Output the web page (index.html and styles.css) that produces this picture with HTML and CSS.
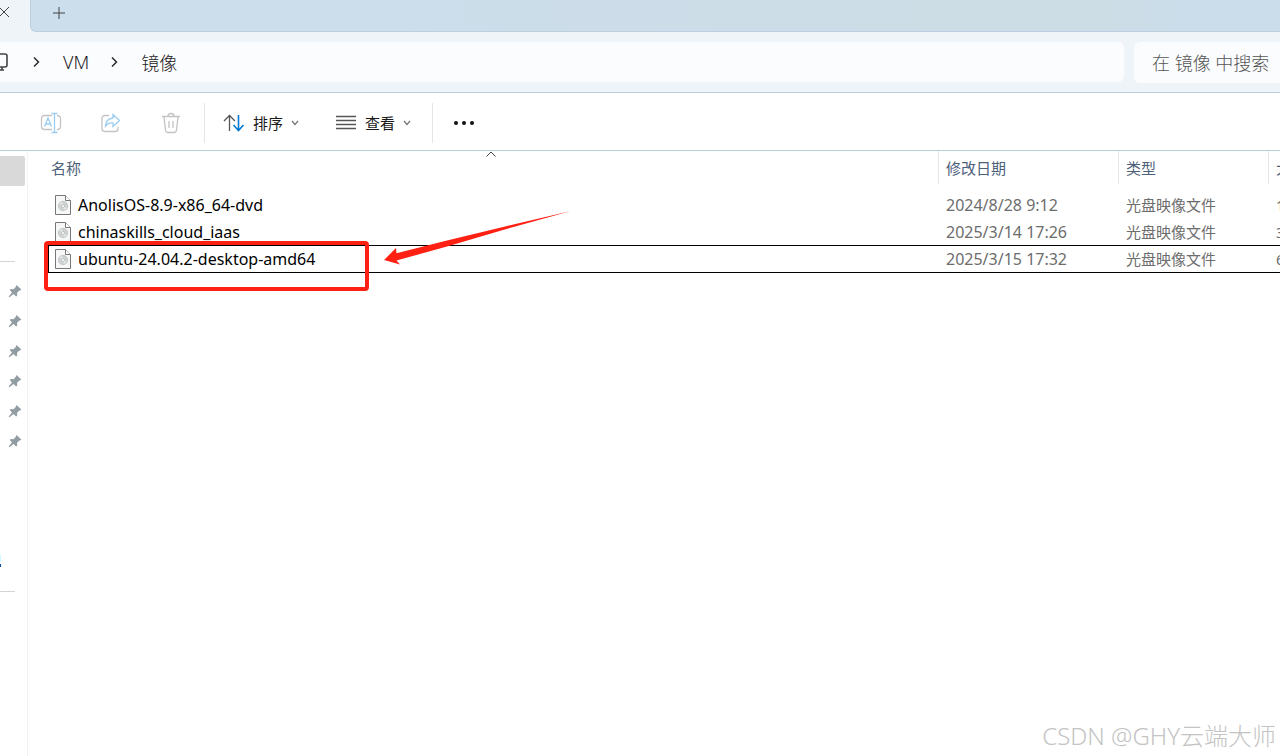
FILE: index.html
```html
<!DOCTYPE html>
<html lang="zh-CN">
<head>
  <meta charset="UTF-8" />
  <meta name="viewport" content="width=device-width, initial-scale=1.0"/>
  <title>镜像</title>
  <link rel="stylesheet" href="styles.css">
</head>
<body>

  <header class="tab-bar">
    <div class="tab">
      <button class="tab-close" aria-label="关闭标签页">
        <svg width="12" height="12" viewBox="0 0 12 12"><path d="M1 1l10 10M11 1L1 11"/></svg>
      </button>
    </div>
    <div class="tab-rest">
      <button class="tab-new" aria-label="新建标签页">
        <svg width="12" height="12" viewBox="0 0 12 12"><path d="M6 0v12M0 6h12"/></svg>
      </button>
    </div>
  </header>

  <div class="nav-bar">
    <nav class="address" aria-label="路径">
      <svg class="pc-icon" width="8" height="20" viewBox="0 0 8 20"><path d="M0 2h5q2 0 2 2v9q0 2-2 2H0M2 15v3M0 18h4"/></svg>
      <svg class="crumb-arrow" width="8" height="12" viewBox="0 0 8 12"><path d="M2 1.500l4.500 4.500L2 10.500"/></svg>
      <a class="crumb" href="#">VM</a>
      <svg class="crumb-arrow" width="8" height="12" viewBox="0 0 8 12"><path d="M2 1.500l4.500 4.500L2 10.500"/></svg>
      <a class="crumb" href="#">镜像</a>
    </nav>
    <input class="search" type="text" placeholder="在 镜像 中搜索" aria-label="在 镜像 中搜索">
  </div>

  <div class="toolbar">
    <div class="tool-group tool-edit">
      <button class="tool" aria-label="重命名" disabled>
        <svg width="22" height="22" viewBox="0 0 22 22">
          <path class="dim" d="M12 3.500H4.500q-3 0-3 3v8q0 3 3 3H12M17 3.500q3.500 0 3.500 3v8q0 3-3.500 3"/>
          <path class="tint" d="M4.500 14.500l3.500-8.500 3.500 8.500M5.500 12h5M14.500 1.500v19M11.500 1.500h6M11.500 20.500h6"/>
        </svg>
      </button>
      <button class="tool" aria-label="共享" disabled>
        <svg width="22" height="22" viewBox="0 0 22 22">
          <path class="dim" d="M9 3.500H5q-3 0-3 3v10q0 3 3 3h10q3 0 3-3v-2"/>
          <path class="tint" d="M13 2.500l6.500 6-6.500 6v-3.500q-5-.5-7.500 3 .5-7.500 7.500-8z"/>
        </svg>
      </button>
      <button class="tool" aria-label="删除" disabled>
        <svg width="22" height="22" viewBox="0 0 22 22">
          <path class="dim" d="M2 4.500h18M8 4q0-2.500 3-2.500T14 4M4 5l1.500 13q.3 2.500 2.500 2.500h6q2.200 0 2.500-2.500L18 5M9 9v7M13 9v7"/>
        </svg>
      </button>
    </div>
    <div class="tool-group tool-view">
      <button class="tool-text">
        <svg width="22" height="18" viewBox="0 0 22 18">
          <path class="up" d="M6.500 17V1.500M1 7l5.500-5.500L12 7"/>
          <path class="down" d="M15.500 1v15.500M10.500 11l5 5.500 5-5.500"/>
        </svg>
        <span>排序</span>
        <svg class="caret" width="8" height="6" viewBox="0 0 8 6"><path d="M1 1l3 3.500L7 1"/></svg>
      </button>
      <button class="tool-text">
        <svg width="22" height="18" viewBox="0 0 22 18"><path class="up" d="M1 2.500h20M1 6.500h20M1 10.500h20M1 14.500h20"/></svg>
        <span>查看</span>
        <svg class="caret" width="8" height="6" viewBox="0 0 8 6"><path d="M1 1l3 3.500L7 1"/></svg>
      </button>
    </div>
    <button class="more" aria-label="查看更多">
      <svg width="22" height="6" viewBox="0 0 22 6"><circle cx="3" cy="3" r="2"/><circle cx="11" cy="3" r="2"/><circle cx="19" cy="3" r="2"/></svg>
    </button>
  </div>

  <main class="content">
    <svg class="defs" width="0" height="0" aria-hidden="true">
      <symbol id="pin" viewBox="0 0 14 14">
        <path d="M8.500 1l4.800 4.500-1.300 1-1 .2-2 2.300.2 2.500-1 1L5.500 10 1.500 13.300.7 12.600 4 8.500 1.800 6l1-1 2.700.2L7.700 3z"/>
      </symbol>
      <symbol id="disc" viewBox="0 0 16 20">
        <path d="M.5.5h10l5 5v14H.5z" fill="#f7f7f7" stroke="#777"/>
        <path d="M10.500.5v5h5" fill="#fff" stroke="#777"/>
        <circle cx="8" cy="11" r="4.700" fill="#cdd2d2" stroke="#b4b8b8" stroke-width=".6"/>
        <path d="M8 11L4.500 8.500 7 7zM8 11l1 4 2.500-2z" fill="#e6eaea" stroke="none"/>
        <circle cx="8" cy="11" r="1.500" fill="#fff" stroke="#aaa" stroke-width=".6"/>
      </symbol>
    </svg>

    <aside class="sidebar">
      <div class="side-active"></div>
      <hr>
      <ul class="pins">
        <li><svg><use href="#pin"/></svg></li>
        <li><svg><use href="#pin"/></svg></li>
        <li><svg><use href="#pin"/></svg></li>
        <li><svg><use href="#pin"/></svg></li>
        <li><svg><use href="#pin"/></svg></li>
        <li><svg><use href="#pin"/></svg></li>
      </ul>
      <div class="side-drive"></div>
      <hr>
    </aside>

    <section class="files">
      <table>
        <colgroup>
          <col>
          <col class="col-date">
          <col class="col-type">
          <col class="col-size">
        </colgroup>
        <thead>
          <tr>
            <th>名称
              <svg class="sort" width="10" height="6" viewBox="0 0 10 6"><path d="M.5 5.500L5 1l4.500 4.500"/></svg>
            </th>
            <th>修改日期</th>
            <th>类型</th>
            <th>大小</th>
          </tr>
        </thead>
        <tbody>
          <tr>
            <td><div class="name"><svg><use href="#disc"/></svg>AnolisOS-8.9-x86_64-dvd</div></td>
            <td class="num">2024/8/28 9:12</td>
            <td>光盘映像文件</td>
            <td>1</td>
          </tr>
          <tr>
            <td><div class="name"><svg><use href="#disc"/></svg>chinaskills_cloud_iaas</div></td>
            <td class="num">2025/3/14 17:26</td>
            <td>光盘映像文件</td>
            <td>3</td>
          </tr>
          <tr class="focused">
            <td><div class="name"><svg><use href="#disc"/></svg>ubuntu-24.04.2-desktop-amd64</div></td>
            <td class="num">2025/3/15 17:32</td>
            <td>光盘映像文件</td>
            <td>6</td>
          </tr>
        </tbody>
      </table>
      <div class="mark-box"></div>
      <svg class="mark-arrow" width="188" height="56" viewBox="0 0 188 56">
        <path d="M187 0L119 16 63 29.500 12.500 42.300 12 37 0 49l16 4.500-3.500-4L63 35.500 119 19z"/>
      </svg>
    </section>
  </main>

  <div class="watermark">CSDN @GHY云端大师</div>

</body>
</html>
```
FILE: styles.css
```css
* {
  box-sizing: border-box;
}
body {
  margin: 0;
  min-height: 100vh;
  display: flex;
  flex-direction: column;
  overflow: hidden;
  background: #fff;
  color: #1a1a1a;
  font-family: "Noto Sans", "Noto Sans CJK SC", sans-serif;
  font-size: 15px;
}
button {
  display: block;
  padding: 0;
  border: none;
  background: none;
  font: inherit;
  color: inherit;
}
svg {
  display: block;
  flex: none;
  fill: none;
  stroke: #444;
}
.defs {
  position: absolute;
}

/* tabs */
.tab-bar {
  display: flex;
  height: 32px;
  background: #eff4f8;
}
.tab {
  width: 30px;
  padding-top: 6px;
}
.tab-close {
  margin-left: -2px;
}
.tab-rest {
  flex: 1;
  padding: 7px 22px;
  border-left: 1px solid #bccfe0;
  border-bottom: 1px solid #bccfe0;
  border-bottom-left-radius: 6px;
  background: linear-gradient(90deg, #ccddeb 30%, #cddde5 84%, #cbddea 92%);
}

/* address and search */
.nav-bar {
  display: flex;
  gap: 10px;
  height: 61px;
  padding: 10px 0;
  border-bottom: 1px solid #b8cddc;
  background: #eff4f8;
}
.address {
  flex: 1;
  display: flex;
  align-items: center;
  height: 40px;
  border-radius: 0 6px 6px 0;
  background: #fbfcfe;
  font-size: 18px;
  font-weight: 300;
}
.crumb-arrow {
  margin: 0 23px 0 24px;
  stroke: #222;
  stroke-width: 1.4;
}
.crumb {
  color: #1a1a1a;
  text-decoration: none;
}
.pc-icon {
  stroke-width: 1.6;
}
.crumb + .crumb-arrow {
  margin-left: 21px;
}
.search {
  width: 146px;
  height: 41px;
  padding: 0 0 0 18px;
  border: none;
  border-radius: 6px 0 0 6px;
  background: #fbfcfe;
  font: inherit;
  font-size: 18px;
  font-weight: 300;
}
.search::placeholder {
  color: #555;
}

/* command bar */
.toolbar {
  display: flex;
  align-items: center;
  height: 58px;
  padding-top: 3px;
  border-bottom: 1px solid #b8cddc;
}
.toolbar svg {
  stroke-width: 1.3;
}
.tool-group {
  display: flex;
  align-items: center;
  height: 40px;
  border-right: 1px solid #e5e5e5;
}
.tool-edit {
  gap: 38px;
  padding: 0 22px 0 40px;
}
.tool-view {
  gap: 36px;
  padding: 0 21px 0 18px;
}
.tool-text {
  display: flex;
  align-items: center;
  gap: 8px;
}
.tool-text span {
  line-height: 20px;
}
.dim {
  stroke: #c4c4c4;
}
.tint {
  stroke: #9bcdf0;
}
.up {
  stroke: #555;
}
.down {
  stroke: #0078d4;
  stroke-width: 1.6;
}
.caret {
  stroke: #777;
}
.more {
  margin-left: 20px;
}
.more svg {
  fill: #111;
  stroke: none;
}

/* sidebar */
.content {
  flex: 1;
  display: flex;
}
.sidebar {
  width: 28px;
  padding-top: 5px;
  border-right: 1px solid #f2f2f2;
}
.side-active {
  width: 25px;
  height: 30px;
  margin-bottom: 75px;
  border-radius: 0 2px 2px 0;
  background: #d9d9d9;
}
.sidebar hr {
  width: 15px;
  height: 1px;
  margin: 0;
  border: none;
  background: #d4d4d4;
}
.pins {
  margin: 14px 0 99px;
  padding: 0 0 0 8px;
  list-style: none;
}
.pins li {
  display: flex;
  align-items: center;
  height: 30px;
}
.pins svg {
  width: 14px;
  height: 14px;
  fill: #919ca3;
  stroke: none;
}
.side-drive {
  width: 1px;
  height: 12px;
  margin-bottom: 24px;
  background: linear-gradient(#ccf8ff 60%, #fff 60%, #fff 75%, #0a4fa8 75%);
}

/* file list */
.files {
  position: relative;
  flex: 1;
  min-width: 0;
  padding-left: 20px;
}
.files table {
  width: 100%;
  table-layout: fixed;
  border-collapse: separate;
  border-spacing: 0;
}
.col-date {
  width: 180px;
}
.col-type {
  width: 150px;
}
.col-size {
  width: 12px;
}
th, td {
  padding: 0 0 0 8px;
  overflow: hidden;
  white-space: nowrap;
  text-align: left;
  font-weight: normal;
  line-height: 20px;
}
th {
  position: relative;
  height: 33px;
  border-left: 1px solid #e5e5e5;
  padding-left: 7px;
  color: #4c607a;
}
th:first-child {
  border: none;
  padding-left: 3px;
}
tbody::before {
  content: "";
  display: block;
  height: 7px;
}
td {
  height: 27px;
  color: #6d6d6d;
}
td:first-child {
  padding-left: 7px;
  color: #000;
}
.sort {
  position: absolute;
  top: 0;
  left: 50%;
  margin-left: -7px;
}
.name {
  display: flex;
  align-items: center;
  gap: 7px;
}
.name, .num {
  font-size: 16px;
}
.name svg {
  width: 16px;
  height: 20px;
}
.focused td {
  height: 28px;
  border-top: 1px solid #000;
  border-bottom: 1px solid #000;
}
.focused td:first-child {
  border-left: 1px solid #000;
  padding-left: 6px;
}

/* callout over the list */
.mark-box {
  position: absolute;
  top: 90px;
  left: 16px;
  width: 325px;
  height: 50px;
  border: 4px solid #ff2014;
  border-radius: 4px;
}
.mark-arrow {
  position: absolute;
  top: 60px;
  left: 356px;
  fill: #ff2014;
  stroke: none;
}
.watermark {
  position: absolute;
  right: 4px;
  bottom: 4px;
  color: #c4c4c4;
  font-size: 24px;
  font-weight: 300;
}
```
